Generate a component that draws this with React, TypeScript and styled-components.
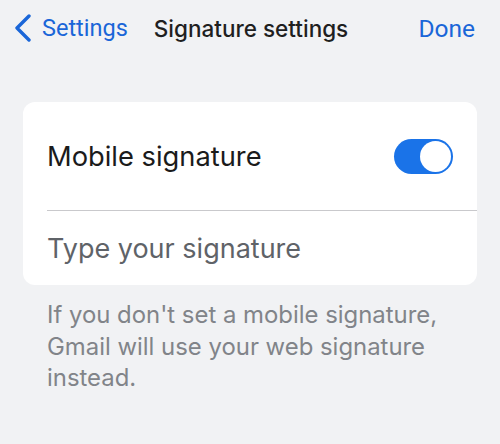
import React, { useState } from "react";
import styled, { createGlobalStyle } from "styled-components";

const GlobalStyle = createGlobalStyle`
  html, body {
    margin: 0;
    padding: 0;
    background: #f1f2f4;
  }
  body {
    font-family: Inter, "Noto Sans", sans-serif;
    -webkit-font-smoothing: antialiased;
  }
`;

const Screen = styled.div`
  width: 500px;
  height: 444px;
  background: #f1f2f4;
  overflow: hidden;
`;

const NavBar = styled.div`
  display: flex;
  align-items: center;
  height: 56px;
  padding: 0 25px 0 14px;
`;

const BackButton = styled.button`
  display: flex;
  align-items: center;
  gap: 10px;
  border: none;
  background: none;
  padding: 0;
  color: #1a66d8;
  font-family: Roboto, sans-serif;
  font-size: 23.5px;
  cursor: pointer;
`;

const Title = styled.h1`
  margin: 0 0 0 26px;
  flex: 1;
  font-size: 22.5px;
  font-weight: 500;
  color: #1f1f1f;
`;

const DoneButton = styled.button`
  border: none;
  background: none;
  padding: 0;
  color: #1a66d8;
  font-family: Roboto, sans-serif;
  font-size: 24.5px;
  font-weight: 400;
  cursor: pointer;
`;

const Content = styled.div`
  padding: 46px 23px 0;
`;

const Card = styled.div`
  background: #ffffff;
  border-radius: 12px;
  padding-left: 24px;
`;

const Row = styled.div`
  display: flex;
  align-items: center;
  justify-content: space-between;
  height: 108px;
  padding-right: 24px;
  border-bottom: 1px solid #c9c9cc;
`;

const RowLabel = styled.span`
  font-size: 27.3px;
  color: #1b1b1b;
`;

const SignatureInput = styled.input`
  display: block;
  width: 100%;
  height: 74px;
  box-sizing: border-box;
  border: none;
  outline: none;
  background: transparent;
  padding: 0;
  font-family: Inter, sans-serif;
  font-size: 27px;
  color: #1b1b1b;

  &::placeholder {
    color: #5f6368;
  }
`;

const Track = styled.button<{ $on: boolean }>`
  position: relative;
  width: 59px;
  height: 35px;
  border: none;
  border-radius: 18px;
  padding: 0;
  background: ${(p) => (p.$on ? "#1a73e8" : "#dadce0")};
  cursor: pointer;
`;

const Knob = styled.span<{ $on: boolean }>`
  position: absolute;
  top: 2px;
  left: ${(p) => (p.$on ? "26px" : "2px")};
  width: 31px;
  height: 31px;
  border-radius: 50%;
  background: #ffffff;
`;

const Footnote = styled.p`
  margin: 14px 0 0 24px;
  font-size: 23.9px;
  line-height: 31.5px;
  color: #818489;
`;

const Chevron = () => (
  <svg width="18" height="28" viewBox="0 0 18 28" fill="none">
    <path
      d="M15 2 L3 14 L15 26"
      stroke="#1a66d8"
      strokeWidth="3.4"
      strokeLinecap="round"
      strokeLinejoin="round"
    />
  </svg>
);

export default function App() {
  const [on, setOn] = useState(true);
  return (
    <Screen>
      <GlobalStyle />
      <NavBar>
        <BackButton>
          <Chevron />
          Settings
        </BackButton>
        <Title>Signature settings</Title>
        <DoneButton>Done</DoneButton>
      </NavBar>
      <Content>
        <Card>
          <Row>
            <RowLabel>Mobile signature</RowLabel>
            <Track $on={on} onClick={() => setOn(!on)}>
              <Knob $on={on} />
            </Track>
          </Row>
          <SignatureInput placeholder="Type your signature" />
        </Card>
        <Footnote>
          If you don't set a mobile signature, Gmail will use your web
          signature instead.
        </Footnote>
      </Content>
    </Screen>
  );
}
